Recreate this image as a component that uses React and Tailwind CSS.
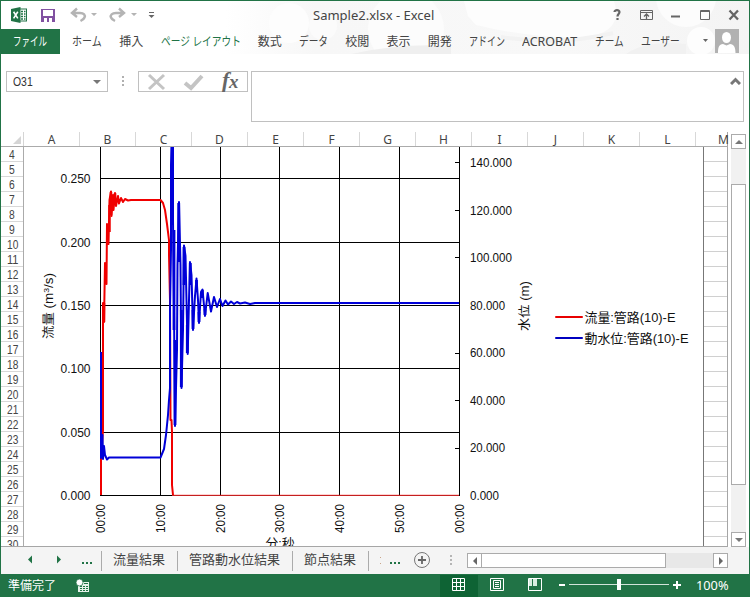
import { useLayoutEffect, useRef } from 'react';

/* One line of text, horizontally condensed or expanded to a fixed width. */
function Fit({ w, className = '', children }) {
  const ref = useRef(null);
  useLayoutEffect(() => {
    const el = ref.current;
    el.style.transform = `scaleX(${w / el.offsetWidth})`;
  }, [w]);
  return (
    <span className={`block shrink-0 whitespace-nowrap ${className}`} style={{ width: w }}>
      <span ref={ref} className="block w-max origin-left">{children}</span>
    </span>
  );
}

const TABS = [
  ['ホーム', 30], ['挿入', 24], ['ページ レイアウト', 80], ['数式', 24], ['データ', 29], ['校閲', 24],
  ['表示', 24], ['開発', 24], ['アドイン', 36], ['ACROBAT', 55], ['チーム', 29], ['ユーザー', 39],
];

function ExcelLogo() {
  return (
    <svg className="h-4 w-4" viewBox="0 0 16 16">
      <rect x="8.5" y="2" width="7" height="12" fill="#fff" stroke="#217346" />
      <path d="M10 4.5h2M13 4.5h1.5M10 7h2M13 7h1.5M10 9.500h2M13 9.500h1.500M10 12h2M13 12h1.500" stroke="#217346" strokeWidth="1.4" />
      <path d="M0 2 9.500 0v16L0 14z" fill="#217346" />
      <path d="m2.600 4.800 4.200 6.600M6.800 4.800l-4.200 6.600" stroke="#fff" strokeWidth="1.600" />
    </svg>
  );
}

function TitleBar() {
  return (
    <div className="relative flex h-7 items-center">
      <div className="ml-[10px] flex"><ExcelLogo /></div>
      <svg className="ml-[14px] h-[15px] w-[14px]" viewBox="0 0 14 15">
        <path d="M0 1h14v13H0z" fill="#8151a1" />
        <path d="M2 2h10v6H2zM3 10h3v4H3zM8 10h3v4H8z" fill="#fff" />
      </svg>
      <svg className="ml-[15px] h-4 w-[88px]" viewBox="0 0 88 16" fill="none">
        <path d="M2 6h8c4 0 5.500 2 4.500 4.500-.5 1.500-2 2.500-4 3.500M7 1.500 2 6l5 4" stroke="#b4b4b4" strokeWidth="2.400" />
        <path d="M21 6h6l-3 3zM61 6h6l-3 3z" fill="#b4b4b4" />
        <path d="M54 6h-8c-4 0-6 2-5 4.500.5 1.500 2 2.500 4 3.500M49 1.500 54 6l-5 4" stroke="#b4b4b4" strokeWidth="2.400" />
        <path d="M79 5.500h5" stroke="#666" />
        <path d="M78.500 8h6l-3 3z" fill="#666" />
      </svg>
      <Fit w={121} className="ml-[155px] text-[13px] leading-7 text-[#444]">Sample2.xlsx - Excel</Fit>
      <svg className="ml-[179px] h-4 w-[128px]" viewBox="0 0 128 16" fill="none" stroke="#666">
        <path d="M1.500 5C1.500 2.500 6.500 2.500 6.500 5 6.500 7 4.500 7 4.500 9.500M4.500 11v2" strokeWidth="2.200" />
        <path d="M27.500 3.500h12v9h-12zM27.500 5.500h12" />
        <path d="M33.500 12V7.500M31 9.500 33.500 7 36 9.500" strokeWidth="1.300" />
        <path d="M58 9.500h9" strokeWidth="2" />
        <path d="M87.500 3.500h9v9h-9zM87 4.500h10" />
        <path d="m116.500 3.500 8.500 9M125 3.500l-8.500 9" strokeWidth="2.300" />
      </svg>
    </div>
  );
}

function Ribbon() {
  return (
    <div className="relative flex h-[25px] items-center text-[12px] leading-[25px] text-[#444]">
      <div className="flex h-[25px] w-[59px] items-center bg-[#217346] pl-3 text-white"><Fit w={34}>ファイル</Fit></div>
      <div className="ml-3 flex gap-[17.25px]">
        {TABS.map(([name, w], i) => (
          <Fit key={name} w={w} className={i === 2 ? 'text-[#217346]' : ''}>{name}</Fit>
        ))}
      </div>
      <svg className="ml-auto h-[25px] w-[36px]" viewBox="0 0 36 25">
        <path d="M0 10h5l-2.500 3z" fill="#666" />
        <path d="M12 0h24v24H12z" fill="#b1b1b1" />
        <ellipse cx="23.500" cy="8.500" rx="4.500" ry="5.500" fill="#fff" />
        <path d="M15 24c0-6 1-8.500 5-9l3.500 1.500 3.500-1.500c4 .5 5.500 3 5.500 9z" fill="#fff" />
      </svg>
      <div className="w-[10px]" />
    </div>
  );
}

function HeaderArt() {
  return (
    <svg className="absolute left-0 top-0 h-[53px] w-[748px]" viewBox="0 0 748 53">
      <defs>
        <linearGradient id="haze"><stop offset=".3" stopColor="#fff" /><stop offset=".42" stopColor="#f7f7f7" /><stop offset=".75" stopColor="#f8f8f8" /><stop offset="1" stopColor="#f4f4f4" /></linearGradient>
      </defs>
      <rect width="748" height="53" fill="url(#haze)" />
      <circle cx="288" cy="22" r="20" fill="#fdfdfd" /><circle cx="322" cy="25" r="14" fill="#fbfbfb" />
      <circle cx="405" cy="28" r="38" fill="#fcfcfc" />
      <path d="M350 53q50-11 100-8v8z" fill="#efefef" />
      <path d="M463 0h150q10 32-30 36-50 2-108-12l-8-9z" fill="#fdfdfd" />
      <path d="M500 36q60 9 112-4" fill="none" stroke="#f2f2f2" strokeWidth="4" />
      <circle cx="685" cy="-4" r="30" fill="#fcfcfc" /><circle cx="700" cy="40" r="14" fill="#fdfdfd" />
      <path d="M625 53q20-14 60-10v10z" fill="#f1f1f1" />
    </svg>
  );
}

function FormulaBar() {
  return (
    <div className="mt-[17px] flex items-start">
      <div className="ml-[5px] flex h-[21px] w-[102px] items-center justify-between border border-[#c0c0c0] pl-[6px] pr-[6px] font-['Liberation_Sans',sans-serif] text-[12px] leading-[18px] text-[#333]">
        <Fit w={20}>O31</Fit>
        <svg className="h-1 w-2" viewBox="0 0 8 4"><path d="M0 0h8L4 4z" fill="#777" /></svg>
      </div>
      <svg className="ml-[13px] h-[21px] w-[4px]" viewBox="0 0 4 21"><path d="M1 5h2v2H1zM1 9h2v2H1zM1 13h2v2H1z" fill="#b0b0b0" /></svg>
      <div className="ml-[13px] flex h-[21px] w-[110px] items-center border border-[#c0c0c0]">
        <svg className="h-[19px] w-[108px] overflow-visible" viewBox="0 0 108 19" fill="none">
          <path d="m10 3 15 14M25 3 10 17" stroke="#c4c4c4" strokeWidth="3" />
          <path d="m46 11 6 5L63 4" stroke="#c4c4c4" strokeWidth="4" />
          <text x="83" y="15" fontFamily="Liberation Serif, serif" fontSize="22" fontWeight="700" fontStyle="italic" fill="#666">f</text>
          <text x="90" y="16" fontFamily="Liberation Serif, serif" fontSize="19" fontWeight="700" fontStyle="italic" fill="#666">x</text>
        </svg>
      </div>
      <div className="ml-[3px] flex h-[51px] w-[493px] justify-end border border-[#c0c0c0] pr-[2px] pt-[5px]">
        <svg className="h-[8px] w-[11px]" viewBox="0 0 11 8"><path d="m1 7 4.500-4.500L10 7" fill="none" stroke="#777" strokeWidth="3" /></svg>
      </div>
    </div>
  );
}

const RED = 'M101 495V460L103 430V303L104 322 105 263 106.500 284 107 224 108.500 244 109.500 200 111 191.500 111.500 216 113 195 113.500 210 115 193 116 206 118 196 119 203.500 121 198 123 202 125 199 128 200.500 131 200H160.500L163 203 165 210 167 224 169 240V255L170 300 170.500 420H171.500L172 432V485L173 495';
const BLUE = 'M101 352V458L102.500 435 103 459 104 446 105 455 107 459.500 109 457.500H160.500L164 449 166 435 168 415 169 400 170 388V310L171 250V165L172 140H173V220L174 310 175 426 177 350 177.500 265 179 202 180.500 265 181.500 388 183 330 184 245.500 185.500 256 187.700 354 189 300 190 262 191.500 275 193 330 195 296 196.500 278.500 198 300 199 323 201 292 202.500 289.500 205 316 207.700 293 211 311.500 214 297 217 307 220 299 222.500 306 225.500 300.500 228 304.500 231 301.500 234 304 237 302 240 303.500 245 302.500 250 304 255 303H459';
/* Heavier strokes where the oscillation peaks and troughs fill in. */
const RED_PEAKS = 'M104 303V322M105.500 263V284M107.500 224V244M109.500 205V232M111 192V215M115 193V203';
const BLUE_PEAKS = 'M172 147V225M175 340V425M178.700 203V262M181.300 310V387M184 247V285M187.300 325V353M190.300 263V285M193 310V329M196.500 280V292M199 312V322M202.300 290V298M205 309V315M174 230V330';

function Chart() {
  const xs = [100.5, 160.5, 220.5, 279.5, 339.5, 399.5, 459.5];
  const ys = [178.5, 242.5, 305.5, 368.5, 432.5, 495.5];
  const ja = 'Liberation Sans, Noto Sans CJK JP, sans-serif';
  return (
    <svg className="block h-[399px] w-[679px] shrink-0" viewBox="24 147 679 399" fontFamily={ja} fontSize="12.500" fill="#111">
      <g stroke="#000" strokeWidth="1" shapeRendering="crispEdges">
        {xs.map((x) => <path key={x} d={`M${x} 147V496`} />)}
        {ys.map((y) => <path key={y} d={`M100 ${y}H460`} />)}
        {[162.5, 210.5, 257.5, 305.5, 353.5, 400.5, 448.5].map((y) => <path key={y} d={`M455 ${y}h5`} />)}
      </g>
      <rect x="172" y="495" width="287" height="1" fill="#c42020" />
      <rect x="172" y="494" width="287" height="1" fill="#ff0000" fillOpacity=".18" />
      <path d={RED} fill="none" stroke="#f00000" strokeWidth="2" strokeLinejoin="round" />
      <path d={RED_PEAKS} fill="none" stroke="#f00000" strokeWidth="2.500" />
      <path d={BLUE} fill="none" stroke="#0000d8" strokeWidth="2" strokeLinejoin="round" />
      <path d={BLUE_PEAKS} fill="none" stroke="#0000d8" strokeWidth="2.800" />
      {['0.250', '0.200', '0.150', '0.100', '0.050', '0.000'].map((t, i) => (
        <text key={t} x="60.500" y={ys[i] + 4.5} textLength="30" lengthAdjust="spacingAndGlyphs">{t}</text>
      ))}
      {['140.000', '120.000', '100.000', '80.000', '60.000', '40.000', '20.000', '0.000'].map((t, i) => (
        <text key={t} x="470" y={167 + i * 47.55} textLength={[42, 42, 42, 35, 35, 35, 35, 29][i]} lengthAdjust="spacingAndGlyphs">{t}</text>
      ))}
      {['00:00', '10:00', '20:00', '30:00', '40:00', '50:00', '00:00'].map((t, i) => (
        <text key={i} transform={`translate(${xs[i] + 4.5} 533) rotate(-90)`} textLength="29" lengthAdjust="spacingAndGlyphs">{t}</text>
      ))}
      <text transform="translate(53 339) rotate(-90)" textLength="66" lengthAdjust="spacingAndGlyphs">流量 (m<tspan fontSize="8" dy="-4">3</tspan><tspan dy="4">/s)</tspan></text>
      <text transform="translate(529 331) rotate(-90)" textLength="50" lengthAdjust="spacingAndGlyphs">水位 (m)</text>
      <text x="265.500" y="548" fontSize="13" textLength="29" lengthAdjust="spacingAndGlyphs">分:秒</text>
      <path d="M556 317h26" stroke="#e80000" strokeWidth="2" strokeLinecap="round" />
      <path d="M556 338h26" stroke="#0000c0" strokeWidth="2" strokeLinecap="round" />
      <text x="584.500" y="322" fontSize="13" textLength="91" lengthAdjust="spacingAndGlyphs">流量:管路(10)-E</text>
      <text x="584.500" y="343" fontSize="13" textLength="104" lengthAdjust="spacingAndGlyphs">動水位:管路(10)-E</text>
    </svg>
  );
}

function Sheet() {
  const rows = Array.from({ length: 27 }, (_, i) => i + 4);
  return (
    <div className="mt-[10px] flex h-[415px]">
      <div className="flex w-[727px] flex-col border-b border-r border-[#a6a6a6]">
        <div className="flex h-[15px] border-b border-[#ababab]">
          <svg className="h-[14px] w-[23px] shrink-0" viewBox="0 0 23 14"><path d="M20 4v8h-8z" fill="#d5d5d5" /><path d="M22.500 0v14" stroke="#d5d5d5" /></svg>
          {'ABCDEFGHIJKL'.split('').map((c) => (
            <div key={c} className="w-[56px] shrink-0 border-r border-[#d8d8d8] text-center text-[12px] leading-[15px] text-[#444]">{c}</div>
          ))}
          <div className="ml-auto w-[9px] text-[12px] leading-[15px] text-[#444]">M</div>
        </div>
        <div className="flex h-[399px] overflow-hidden">
          <div className="w-[23px] shrink-0 border-r border-[#ababab]">
            {rows.map((n) => (
              <div key={n} className="flex h-[15px] justify-center border-b border-[#d8d8d8] pt-px font-['Liberation_Sans',sans-serif] text-[12px] leading-[15px] text-[#444]"><Fit w={n < 10 ? 6 : 11}>{n}</Fit></div>
            ))}
          </div>
          <Chart />
          <div className="flex-1 border-l border-[#777]">
            {rows.map((n) => <div key={n} className="h-[15px] border-b border-[#d0d0d0]" />)}
          </div>
        </div>
      </div>
      <div className="ml-[3px] mt-[2px] flex h-[413px] w-[15px] flex-col bg-[#f1f1f1]">
        <div className="flex h-[15px] items-center justify-center border border-[#ababab] bg-white"><svg className="h-1 w-2" viewBox="0 0 8 4"><path d="M0 4h8L4 0z" fill="#777" /></svg></div>
        <div className="mt-[35px] h-[301px] border border-[#ababab] bg-white" />
        <div className="mt-auto flex h-[15px] items-center justify-center border border-[#ababab] bg-white"><svg className="h-1 w-2" viewBox="0 0 8 4"><path d="M0 0h8L4 4z" fill="#777" /></svg></div>
      </div>
    </div>
  );
}

function SheetTabs() {
  return (
    <div className="flex h-[27px] items-center bg-[#f4f4f4] text-[13px] leading-[25px] text-[#444]">
      <svg className="h-[27px] w-[100px] shrink-0" viewBox="1 0 100 27" fill="#217346">
        <path d="m28 12.500 4-4v8zM61 12.500l-4-4v8z" /><path d="M82 15h2v2h-2zM86 15h2v2h-2zM90 15h2v2h-2z" />
      </svg>
      <div className="h-5 w-px bg-[#ababab]" />
      <Fit w={52} className="-mt-[2px] ml-[11px]">流量結果</Fit>
      <div className="ml-[12px] h-5 w-px bg-[#ababab]" />
      <Fit w={91} className="-mt-[2px] ml-[11px]">管路動水位結果</Fit>
      <div className="ml-[12px] h-5 w-px bg-[#ababab]" />
      <Fit w={52} className="-mt-[2px] ml-[11px]">節点結果</Fit>
      <div className="ml-[12px] h-5 w-px bg-[#ababab]" />
      <svg className="h-[27px] w-[98px] shrink-0" viewBox="369 0 98 27">
        <path d="M380 10h1v1h-1zM380 16h1v1h-1z" fill="#c9a58a" />
        <path d="M390 15h2v2h-2zM394 15h2v2h-2zM398 15h2v2h-2z" fill="#217346" />
        <circle cx="422" cy="13" r="7.500" fill="none" stroke="#777" /><path d="M418 13h8M422 9v8" stroke="#666" strokeWidth="1.800" />
        <path d="M450 8h2v2h-2zM450 12h2v2h-2zM450 16h2v2h-2z" fill="#b5b5b5" />
      </svg>
      <div className="flex h-[15px] w-[261px] shrink-0 bg-[#e8e8e8]">
        <div className="flex w-[15px] items-center justify-center border border-[#ababab] bg-white"><svg className="h-[8px] w-1" viewBox="0 0 4 8"><path d="M4 0v8L0 4z" fill="#666" /></svg></div>
        <div className="w-[184px] border border-l-0 border-[#ababab] bg-white" />
        <div className="ml-auto flex w-[15px] items-center justify-center border border-[#ababab] bg-white"><svg className="h-[8px] w-1" viewBox="0 0 4 8"><path d="M0 0v8l4-4z" fill="#666" /></svg></div>
      </div>
    </div>
  );
}

function StatusBar() {
  return (
    <div className="flex h-[23px] items-center bg-[#217346] text-[12px] leading-[23px] text-white">
      <Fit w={48} className="ml-[7px]">準備完了</Fit>
      <svg className="ml-[20px] h-[14px] w-[14px]" viewBox="0 0 14 14">
        <path d="M2 3h11v10H2z" fill="#e6f3ea" />
        <path d="M4 7.500h2M7 7.500h2M10 7.500h2M4 9.500h2M7 9.500h2M10 9.500h2M4 11.500h2M7 11.500h2M10 11.500h2M8 4.500h4" stroke="#217346" />
        <circle cx="3.500" cy="3.500" r="3.500" fill="#fff" stroke="#217346" strokeWidth=".8" />
      </svg>
      <svg className="ml-[350px] h-[23px] w-[250px]" viewBox="440 0 250 23" fill="none" stroke="#fff">
        <path d="M440 1h38v22h-38z" fill="#0e6334" stroke="none" />
        <path d="M452.500 4.500h12v12h-12zM456.500 4v13M460.500 4v13M452 8.500h13M452 12.500h13" />
        <path d="M490.500 4.500h13v12h-13zM493.500 6.500h7v8h-7zM495 8.500h4M495 10.500h4M495 12.500h4" />
        <path d="M528.500 4.500h13v12h-13z" /><path d="M529 5h3v7h-3zM533 5h4v7h-4z" fill="#d9eee1" stroke="none" />
        <path d="M559 11h6M673 11h8M677 7v8" strokeWidth="2" />
        <path d="M569 10.500h100" stroke="#d3e3d9" /><path d="M617 5h4v11h-4z" fill="#fff" stroke="none" />
      </svg>
      <Fit w={33} className="ml-[6px]">100%</Fit>
    </div>
  );
}

export default function App() {
  return (
    <div className="flex h-[597px] w-[750px] flex-col overflow-hidden border border-b-0 border-[#217346] bg-white font-['Noto_Sans','Noto_Sans_CJK_JP',sans-serif]">
      <div className="relative">
        <HeaderArt />
        <TitleBar />
        <Ribbon />
      </div>
      <FormulaBar />
      <Sheet />
      <SheetTabs />
      <StatusBar />
    </div>
  );
}
